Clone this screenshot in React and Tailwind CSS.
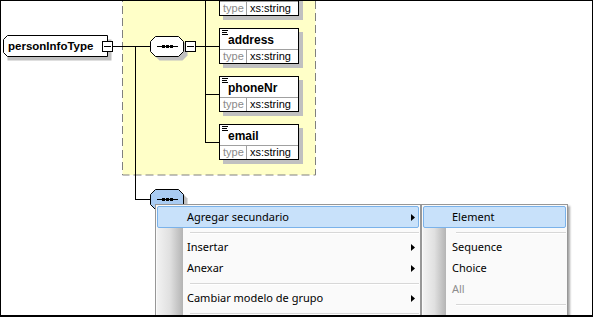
import React from 'react';

// Elements hanging off the first sequence compositor
const elements = [
  { name: '', pos: 'top-[-20px]' },
  { name: 'address', pos: 'top-[28px]' },
  { name: 'phoneNr', pos: 'top-[76px]' },
  { name: 'email', pos: 'top-[124px]' },
];

const mainItems = [
  { label: 'Agregar secundario', sub: true, active: true },
  { sep: true },
  { label: 'Insertar', sub: true },
  { label: 'Anexar', sub: true },
  { sep: true },
  { label: 'Cambiar modelo de grupo', sub: true },
  { sep: true },
];

const subItems = [
  { label: 'Element', active: true },
  { sep: true },
  { label: 'Sequence' },
  { label: 'Choice' },
  { label: 'All', disabled: true },
  { sep: true },
];

const octagon = (x, y, w, h, c) =>
  [
    [x + c, y],
    [x + w - c, y],
    [x + w, y + c],
    [x + w, y + h - c],
    [x + w - c, y + h],
    [x + c, y + h],
    [x, y + h - c],
    [x, y + c],
  ]
    .map((p) => p.join(','))
    .join(' ');

const Dots = ({ y }) => (
  <g>
    <line x1="157" y1={y + 0.5} x2="178" y2={y + 0.5} stroke="#000" />
    <rect x="162" y={y - 1} width="3" height="3" fill="#000" />
    <rect x="166" y={y - 1} width="3" height="3" fill="#000" />
    <rect x="170" y={y - 1} width="3" height="3" fill="#000" />
  </g>
);

const MinusBox = ({ x, y }) => (
  <g>
    <rect x={x + 0.5} y={y + 0.5} width="10" height="10" fill="#fff" stroke="#000" />
    <line x1={x + 2} y1={y + 5.5} x2={x + 9} y2={y + 5.5} stroke="#000" />
  </g>
);

const Diagram = () => (
  <svg className="absolute inset-0" width="593" height="317">
    {/* model group box */}
    <rect x="122.5" y="-10" width="193" height="185" fill="#ffffc8" stroke="#808080" strokeDasharray="8 4" />

    {/* connectors */}
    <g stroke="#000" fill="none">
      <line x1="113" y1="46.5" x2="150" y2="46.5" />
      <line x1="135.5" y1="46" x2="135.5" y2="200" />
      <line x1="135" y1="199.5" x2="151" y2="199.5" />
      <line x1="196" y1="46.5" x2="219" y2="46.5" />
      <line x1="205.5" y1="0" x2="205.5" y2="143" />
      <line x1="205" y1="94.5" x2="219" y2="94.5" />
      <line x1="205" y1="142.5" x2="219" y2="142.5" />
    </g>

    {/* complex type node */}
    <polygon points="7.5,39.5 111.5,39.5 111.5,60.5 7.5,60.5" fill="#c0c0c0" />
    <polygon
      points="7.5,35.5 107.5,35.5 107.5,56.5 7.5,56.5 3.5,52.5 3.5,39.5"
      fill="#fff"
      stroke="#000"
    />
    <MinusBox x={102} y={41} />

    {/* sequence 1 */}
    <polygon points={octagon(154.5, 40.5, 33, 20, 5)} fill="#c0c0c0" />
    <polygon points={octagon(150.5, 36.5, 33, 20, 5)} fill="#fff" stroke="#000" />
    <Dots y={46} />
    <MinusBox x={185} y={41} />

    {/* sequence 2 (selected) */}
    <polygon points={octagon(154.5, 193.5, 33, 20, 5)} fill="#c0c0c0" />
    <polygon points={octagon(150.5, 189.5, 33, 20, 5)} fill="#a9cbf2" stroke="#000" />
    <Dots y={199} />
  </svg>
);

const ElementBox = ({ name, pos }) => (
  <div
    className={`absolute left-[219px] ${pos} w-[80px] h-[36px] flex flex-col bg-white border border-black shadow-[4px_4px_0_#c0c0c0] font-['Liberation_Sans',Arial,sans-serif]`}
  >
    <div className="relative h-[20px] flex items-center pl-[8px] pt-[2px] text-[12px] font-bold text-black">
      <div className="absolute left-[2px] top-[1px] flex flex-col gap-[1px]">
        <div className="w-[6px] h-px bg-black" />
        <div className="w-[5px] h-px bg-black" />
        <div className="w-[6px] h-px bg-black" />
      </div>
      {name}
    </div>
    <div className="h-[14px] flex border-t border-[#a0a0a0] text-[11px] leading-[13px]">
      <div className="w-[27px] pl-[3px] border-r border-[#a0a0a0] text-[#8a8a8a]">type</div>
      <div className="pl-[3px] text-black">xs:string</div>
    </div>
  </div>
);

const Arrow = () => (
  <svg width="4" height="7" viewBox="0 0 4 7">
    <polygon points="0,0 4,3.5 0,7" fill="#000" />
  </svg>
);

const Menu = ({ items, className, gutter, textPad, sepPad }) => (
  <div
    className={`absolute bg-[#fafafa] border border-[#979797] p-[1px] shadow-[2px_2px_2px_rgba(0,0,0,0.35)] font-['Noto_Sans',sans-serif] text-[11px] text-black ${className}`}
  >
    <div
      className={`absolute left-[1px] top-[1px] bottom-0 ${gutter} bg-gradient-to-r from-[#f2f2f2] via-[#e0e0e0] to-[#b4b4b4]`}
    />
    <div className="relative flex flex-col">
      {items.map((it, i) =>
        it.sep ? (
          <div key={i} className={`h-[9px] flex flex-col justify-center ${sepPad}`}>
            <div className="h-px bg-[#d7d7d7]" />
            <div className="h-px bg-white" />
          </div>
        ) : (
          <div
            key={i}
            className={`flex items-center justify-between pr-[3px] border rounded-[2px] ${textPad} ${
              it.active ? 'h-[22px] bg-[#c8e1fa] border-[#7ab2ea]' : 'h-[21px] border-transparent'
            } ${it.disabled ? 'text-[#8d8d8d]' : ''}`}
          >
            <span>{it.label}</span>
            {it.sub && <Arrow />}
          </div>
        )
      )}
    </div>
  </div>
);

export default function App() {
  return (
    <div className="relative w-[593px] h-[317px] overflow-hidden bg-white">
      <Diagram />

      {elements.map((el) => (
        <ElementBox key={el.pos} {...el} />
      ))}

      <div className="absolute left-[8px] top-[38px] text-[11.5px] leading-[16px] font-bold text-black font-['Liberation_Sans',Arial,sans-serif]">
        personInfoType
      </div>

      <Menu
        items={mainItems}
        className="left-[155px] top-[204px] w-[266px] h-[140px]"
        gutter="w-[26px]"
        textPad="pl-[29px]"
        sepPad="pl-[33px]"
      />
      <Menu
        items={subItems}
        className="left-[421px] top-[204px] w-[147px] h-[140px]"
        gutter="w-[23px]"
        textPad="pl-[28px]"
        sepPad="pl-[33px]"
      />

      {/* window frame */}
      <div className="absolute inset-0 border border-b-2 border-black pointer-events-none" />
    </div>
  );
}
